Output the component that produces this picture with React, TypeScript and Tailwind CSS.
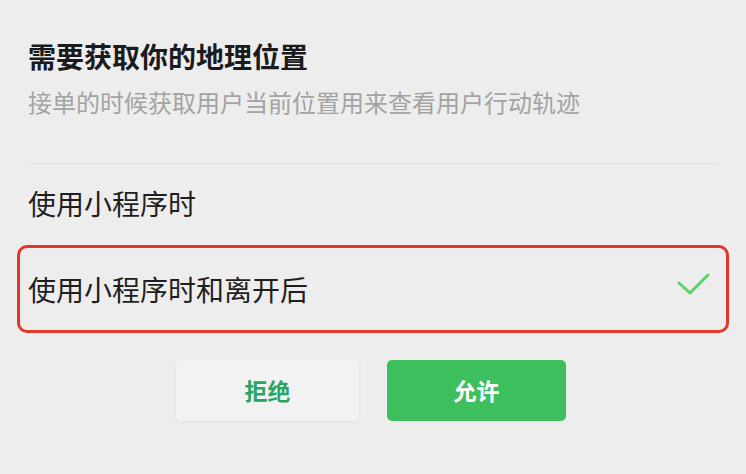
export default function App() {
  return (
    <main
      className="w-[746px] h-[474px] overflow-hidden bg-[#ededed] px-[17px]"
      style={{ fontFamily: '"Noto Sans CJK SC", "Noto Sans", sans-serif' }}
    >
      <div className="px-[11px] pt-[38px]">
        <h1 className="text-[28px] leading-[36px] font-bold text-[#1b1b1b]">
          需要获取你的地理位置
        </h1>
        <p className="mt-[13px] text-[24px] leading-[30px] text-[#a3a3a3]">
          接单的时候获取用户当前位置用来查看用户行动轨迹
        </p>
        <div className="mt-[46px] h-px bg-[#dedede]" />
        <div className="mt-[21px] text-[28px] leading-[36px] text-[#1f1f1f]">
          使用小程序时
        </div>
      </div>

      <div className="mt-[24px] h-[88px] flex items-center justify-between border-[3px] border-[#e2372b] rounded-[10px] pl-[8px] pr-[15px]">
        <span className="text-[28px] leading-[36px] text-[#1f1f1f]">使用小程序时和离开后</span>
        <svg width="34" height="26" viewBox="0 0 34 26" className="-mt-[8px]">
          <polyline
            points="2,11 13,21 31,3"
            fill="none"
            stroke="#5ad36a"
            strokeWidth="3"
            strokeLinecap="round"
            strokeLinejoin="round"
          />
        </svg>
      </div>

      <div className="mt-[27px] flex justify-center gap-[28px] pr-[4px]">
        <button className="w-[183px] h-[61px] rounded-[5px] bg-[#f2f2f2] shadow-[0_1px_4px_rgba(0,0,0,0.06)] text-[23px] font-bold text-[#2ba362]">
          拒绝
        </button>
        <button className="w-[179px] h-[61px] rounded-[5px] bg-[#3dbf5e] text-[23px] font-bold text-white">
          允许
        </button>
      </div>
    </main>
  );
}
